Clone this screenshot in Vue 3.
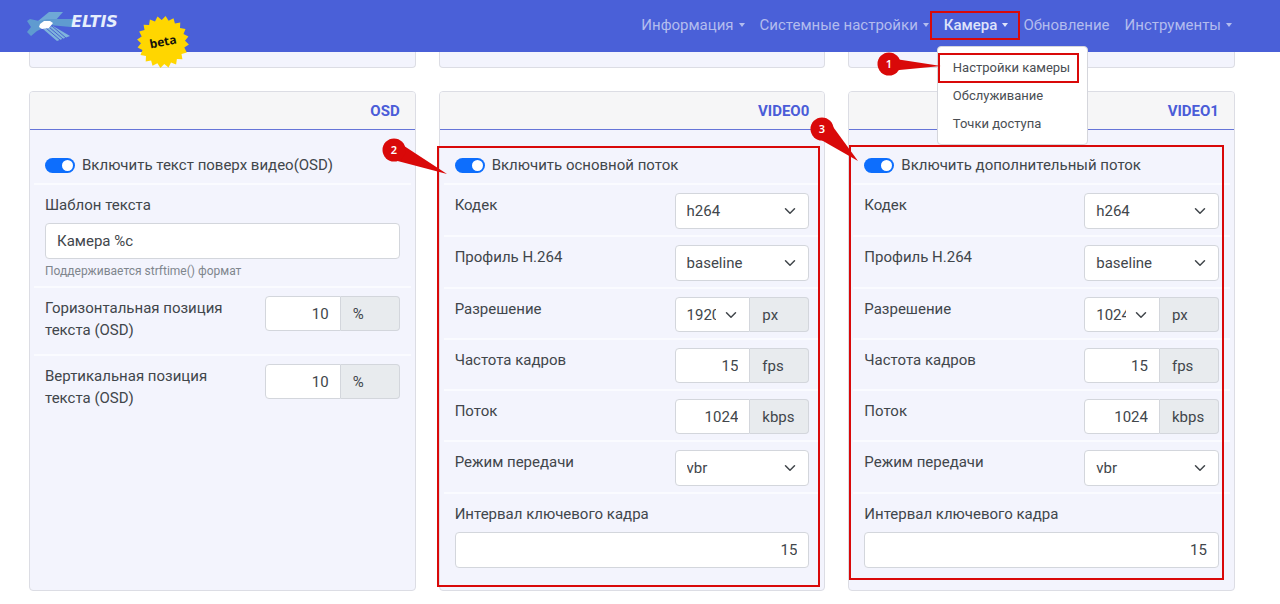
<script setup>
import { reactive } from 'vue'

const nav = [
  { title: 'Информация', menu: true },
  { title: 'Системные настройки', menu: true },
  { title: 'Камера', menu: true, active: true },
  { title: 'Обновление', menu: false },
  { title: 'Инструменты', menu: true },
]
const cameraMenu = ['Настройки камеры', 'Обслуживание', 'Точки доступа']

const osd = reactive({ enabled: true, template: 'Камера %c', x: '10', y: '10' })
const osdPositions = [
  { key: 'x', label: 'Горизонтальная позиция текста (OSD)' },
  { key: 'y', label: 'Вертикальная позиция текста (OSD)' },
]

const streamFields = [
  { key: 'codec', label: 'Кодек', type: 'select' },
  { key: 'profile', label: 'Профиль H.264', type: 'select' },
  { key: 'resolution', label: 'Разрешение', type: 'select', unit: 'px' },
  { key: 'fps', label: 'Частота кадров', type: 'text', unit: 'fps' },
  { key: 'bitrate', label: 'Поток', type: 'text', unit: 'kbps' },
  { key: 'mode', label: 'Режим передачи', type: 'select' },
]
const streams = reactive([
  {
    id: 'video0', title: 'VIDEO0', toggle: 'Включить основной поток', enabled: true, pin: 2,
    values: { codec: 'h264', profile: 'baseline', resolution: '1920x1080', fps: '15', bitrate: '1024', mode: 'vbr', gop: '15' },
  },
  {
    id: 'video1', title: 'VIDEO1', toggle: 'Включить дополнительный поток', enabled: true, pin: 3,
    values: { codec: 'h264', profile: 'baseline', resolution: '1024x576', fps: '15', bitrate: '1024', mode: 'vbr', gop: '15' },
  },
])

const burst = Array.from({ length: 40 }, (_, i) => {
  const r = i % 2 ? 22 : 26
  const a = (i * Math.PI) / 20 + 0.1
  return `${(26 + r * Math.cos(a)).toFixed(1)},${(26 + r * Math.sin(a)).toFixed(1)}`
}).join(' ')
</script>

<template>
  <div class="page">
    <header class="navbar">
      <a class="brand" href="#" aria-label="Eltis">
        <svg class="logo" viewBox="0 0 50 32" aria-hidden="true">
          <path d="M11 11L22 2L36 2L28 11Z" fill="#6fa9d6" />
          <path d="M0 11L3 9L12 11L20 9L49 9L44 17L22 15L10 21L4 26L0 22L4 17Z" fill="#5f9bd0" />
          <path d="M16 19L26 16L43 26L30 31Z" fill="#7fb4dc" />
          <path d="M19 18L33 30M22 17L36 29M25 16L39 28" stroke="#4a62d0" stroke-width="1" />
          <path d="M13 14L17 11L23 11L26 13L22 18L15 19L12 17Z" fill="#fff" />
        </svg>
        <span class="brand-name">ELTIS</span>
      </a>
      <div class="beta">
        <svg viewBox="0 0 52 52" aria-hidden="true"><polygon :points="burst" fill="#ffd600" /></svg>
        <span>beta</span>
      </div>
      <nav class="links">
        <div v-for="item in nav" :key="item.title" class="nav-item">
          <a href="#" class="nav-link" :class="{ active: item.active }">
            {{ item.title }}<i v-if="item.menu" class="caret"></i>
          </a>
          <div v-if="item.active" class="menu">
            <a v-for="(entry, i) in cameraMenu" :key="entry" href="#" :class="{ picked: i === 0 }">{{ entry }}</a>
            <svg class="pin pin-1" viewBox="0 0 64 24" aria-hidden="true">
              <path d="M12 6L64 14L12 19Z" fill="#d90909" />
              <circle cx="12" cy="12" r="11.5" fill="#d90909" />
              <text x="12" y="16">1</text>
            </svg>
          </div>
        </div>
      </nav>
    </header>

    <main>
      <div class="grid previous">
        <section v-for="n in 3" :key="n" class="card"></section>
      </div>
      <div class="grid">
        <section class="card">
          <h2>OSD</h2>
          <div class="body">
            <div class="row switch">
              <input id="osd-on" v-model="osd.enabled" type="checkbox" role="switch" />
              <label for="osd-on">Включить текст поверх видео(OSD)</label>
            </div>
            <div class="row stacked">
              <label for="osd-template">Шаблон текста</label>
              <input id="osd-template" v-model="osd.template" class="control" type="text" />
              <small>Поддерживается strftime() формат</small>
            </div>
            <div v-for="p in osdPositions" :key="p.key" class="row">
              <label :for="'osd-' + p.key">{{ p.label }}</label>
              <div class="field group">
                <input :id="'osd-' + p.key" v-model="osd[p.key]" class="control number" type="text" />
                <span class="unit">%</span>
              </div>
            </div>
          </div>
        </section>

        <section v-for="s in streams" :key="s.id" class="card" :class="s.id">
          <h2>{{ s.title }}</h2>
          <div class="body">
            <div class="row switch">
              <input :id="s.id + '-on'" v-model="s.enabled" type="checkbox" role="switch" />
              <label :for="s.id + '-on'">{{ s.toggle }}</label>
            </div>
            <div v-for="f in streamFields" :key="f.key" class="row">
              <label :for="s.id + '-' + f.key">{{ f.label }}</label>
              <div class="field" :class="{ group: f.unit }">
                <div v-if="f.type === 'select'" class="select">
                  <select :id="s.id + '-' + f.key" v-model="s.values[f.key]" class="control">
                    <option>{{ s.values[f.key] }}</option>
                  </select>
                  <svg viewBox="0 0 16 16" aria-hidden="true"><path d="M2 5l6 6 6-6" /></svg>
                </div>
                <input v-else :id="s.id + '-' + f.key" v-model="s.values[f.key]" class="control number" type="text" />
                <span v-if="f.unit" class="unit">{{ f.unit }}</span>
              </div>
            </div>
            <div class="row stacked">
              <label :for="s.id + '-gop'">Интервал ключевого кадра</label>
              <input :id="s.id + '-gop'" v-model="s.values.gop" class="control number" type="text" />
            </div>
          </div>
          <div class="frame"></div>
          <svg v-if="s.pin === 2" class="pin pin-2" viewBox="0 0 66 38" aria-hidden="true">
            <path d="M16 4L65 36L8 21Z" fill="#d90909" />
            <circle cx="12" cy="12" r="11.5" fill="#d90909" />
            <text x="12" y="16">2</text>
          </svg>
          <svg v-else class="pin pin-3" viewBox="0 0 50 46" aria-hidden="true">
            <path d="M21 7L48 44L6 20Z" fill="#d90909" />
            <circle cx="12" cy="12" r="11.5" fill="#d90909" />
            <text x="12" y="16">3</text>
          </svg>
        </section>
      </div>
    </main>
  </div>
</template>

<style>
body {
  margin: 0;
  background: #fff;
}
</style>

<style scoped>
* {
  box-sizing: border-box;
}
.page {
  font-family: Roboto, "Noto Sans", sans-serif;
  font-size: 15px;
  line-height: 22px;
  color: #41464b;
}
.navbar {
  position: relative;
  z-index: 2;
  display: flex;
  align-items: center;
  height: 52px;
  padding: 0 41px 0 27px;
  background: #4a60d8;
}
.brand {
  display: flex;
  align-items: center;
  color: #fff;
  text-decoration: none;
}
.logo {
  width: 50px;
  height: 32px;
}
.brand-name {
  margin: -8px 0 0 -6px;
  font: italic bold 16px/16px "DejaVu Sans", sans-serif;
  color: #e6eefc;
}
.beta {
  position: absolute;
  left: 137px;
  top: 16px;
  width: 52px;
  height: 52px;
}
.beta svg {
  display: block;
}
.beta span {
  position: absolute;
  inset: 0;
  font: bold 12px/52px "Open Sans", sans-serif;
  text-align: center;
  color: #15130a;
  transform: rotate(-11deg);
}
.links {
  display: flex;
  margin-left: auto;
}
.nav-item {
  position: relative;
}
.nav-link {
  position: relative;
  display: block;
  padding: 2px 7px 4px 8px;
  color: #b3bcee;
  text-decoration: none;
  white-space: nowrap;
}
.nav-link.active {
  color: #dfe3fa;
  font-weight: 500;
}
.nav-link.active::after {
  content: "";
  position: absolute;
  inset: -1px -5px 0 -6px;
  border: 2px solid #d90909;
}
.caret {
  display: inline-block;
  margin-left: 5px;
  vertical-align: 3px;
  border: 3px solid transparent;
  border-top: 4px solid currentColor;
  border-bottom: 0;
}
.menu {
  position: absolute;
  top: 34px;
  left: 1px;
  display: flex;
  flex-direction: column;
  width: 151px;
  padding: 7px 9px 6px 1px;
  border: 1px solid #d5d6dc;
  border-radius: 4px;
  background: #fff;
}
.menu a {
  padding: 3px 5px 3px 14px;
  font-size: 13px;
  color: #4a4e53;
  text-decoration: none;
  white-space: nowrap;
}
.menu .picked {
  outline: 2px solid #d90909;
  outline-offset: -1px;
}
.pin {
  position: absolute;
  z-index: 3;
}
.pin text {
  font: 600 11px "Noto Sans", sans-serif;
  fill: #fff;
  text-anchor: middle;
}
.pin-1 {
  width: 64px;
  height: 24px;
  left: -61px;
  top: 5px;
}
.pin-2 {
  width: 66px;
  height: 38px;
  left: -58px;
  top: 46px;
}
.pin-3 {
  width: 50px;
  height: 46px;
  left: -39px;
  top: 25px;
}
main {
  padding: 0 45px 14px 29px;
}
.grid {
  display: grid;
  grid-template-columns: repeat(3, 1fr);
  gap: 23px;
}
.card {
  position: relative;
  min-width: 0;
  border: 1px solid #dcdde4;
  border-radius: 4px;
  background: #f3f4fd;
}
.previous {
  margin-bottom: 23px;
}
.previous .card {
  height: 16px;
  border-top: 0;
  border-radius: 0 0 4px 4px;
}
h2 {
  margin: 0;
  padding: 8px 15px 7px;
  border-bottom: 1px solid #6675d8;
  border-radius: 3px 3px 0 0;
  background: #f6f6f7;
  font-size: 15px;
  line-height: 22px;
  font-weight: 700;
  text-align: right;
  color: #4a5cd8;
}
.body {
  padding: 15px 4px 16px;
}
.row {
  display: flex;
  align-items: flex-start;
  justify-content: space-between;
  padding: 8px 11px 6px;
  border-bottom: 2px solid #fafbff;
}
.row:last-child {
  border-bottom: 0;
}
.row > label {
  flex: 1;
  padding: 1px 16px 7px 0;
}
.row.switch {
  justify-content: flex-start;
  align-items: center;
  gap: 7px;
}
.row.switch label {
  padding: 1px 0;
}
.switch input {
  appearance: none;
  display: flex;
  align-items: center;
  width: 30px;
  height: 15px;
  margin: 0;
  padding: 2px;
  border-radius: 8px;
  background: #adb5bd;
}
.switch input::before {
  content: "";
  width: 11px;
  height: 11px;
  border-radius: 50%;
  background: #fff;
}
.switch input:checked {
  justify-content: flex-end;
  background: #0d6efd;
}
.row.stacked {
  flex-direction: column;
  align-items: stretch;
}
.field {
  flex: 0 0 38%;
  display: flex;
}
.control {
  width: 100%;
  min-width: 0;
  height: 36px;
  margin: 0;
  padding: 0 11px;
  border: 1px solid #d3d6dc;
  border-radius: 4px;
  background: #fff;
  font: inherit;
  color: #41464b;
}
.number {
  text-align: right;
}
.select {
  position: relative;
  flex: 1;
  min-width: 0;
}
.select .control {
  display: block;
  appearance: none;
  padding-right: 33px;
}
.select svg {
  position: absolute;
  right: 13px;
  top: 12px;
  width: 12px;
  height: 12px;
  fill: none;
  stroke: #41464b;
  stroke-width: 2;
  stroke-linecap: round;
  stroke-linejoin: round;
  pointer-events: none;
}
.group .control {
  flex: 1;
  height: 35px;
  border-radius: 4px 0 0 4px;
}
.unit {
  flex: 0 0 59px;
  padding: 7px 0 5px 12px;
  border: 1px solid #d3d6dc;
  border-left: 0;
  border-radius: 0 4px 4px 0;
  background: #e8ebee;
  line-height: 21px;
}
small {
  font-size: 12px;
  line-height: 18px;
  margin-top: 3px;
  color: #7f868d;
}
.frame {
  position: absolute;
  border: 2px solid #d90909;
  pointer-events: none;
}
.video0 .frame {
  inset: 54px 4px 3px -3px;
}
.video1 .frame {
  inset: 53px 10px 10px 0;
}
</style>
